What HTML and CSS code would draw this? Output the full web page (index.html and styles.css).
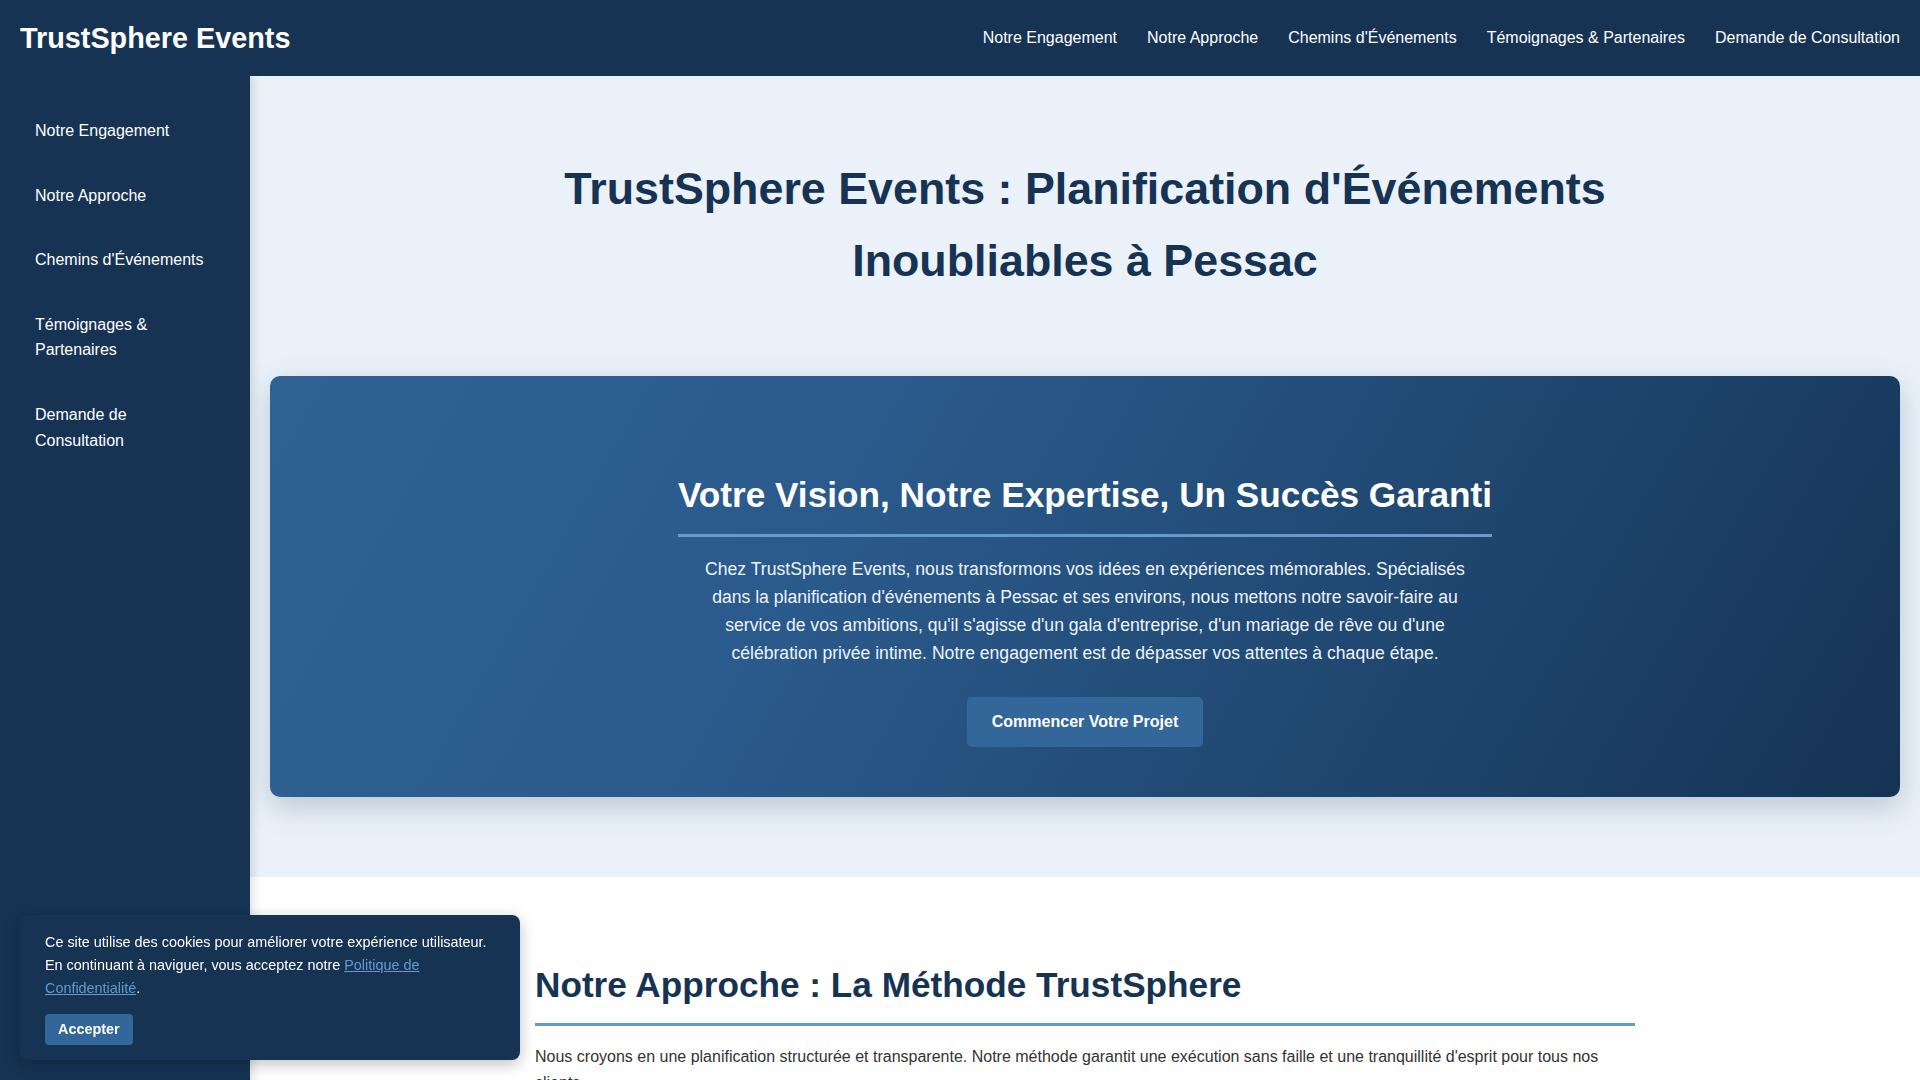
FILE: index.html
```html
<!DOCTYPE html>
<html lang="fr">
<head>
<meta charset="utf-8">
<title>TrustSphere Events</title>
<link rel="stylesheet" href="styles.css">
</head>
<body>
<header class="topbar">
  <div class="logo">TrustSphere Events</div>
  <nav class="topnav">
    <a href="#engagement">Notre Engagement</a>
    <a href="#approche">Notre Approche</a>
    <a href="#chemins">Chemins d'Événements</a>
    <a href="#temoignages">Témoignages &amp; Partenaires</a>
    <a href="#consultation">Demande de Consultation</a>
  </nav>
</header>
<div class="layout">
  <aside class="sidebar">
    <a href="#engagement">Notre Engagement</a>
    <a href="#approche">Notre Approche</a>
    <a href="#chemins">Chemins d'Événements</a>
    <a href="#temoignages">Témoignages &amp; Partenaires</a>
    <a href="#consultation">Demande de Consultation</a>
  </aside>
  <main class="content">
    <section class="hero" id="engagement">
      <h1 class="hero-title">TrustSphere Events : Planification d'Événements Inoubliables à Pessac</h1>
      <div class="card">
        <h2 class="card-title">Votre Vision, Notre Expertise, Un Succès Garanti</h2>
        <p class="card-text">Chez TrustSphere Events, nous transformons vos idées en expériences mémorables. Spécialisés dans la planification d'événements à Pessac et ses environs, nous mettons notre savoir-faire au service de vos ambitions, qu'il s'agisse d'un gala d'entreprise, d'un mariage de rêve ou d'une célébration privée intime. Notre engagement est de dépasser vos attentes à chaque étape.</p>
        <a class="btn" href="#consultation">Commencer Votre Projet</a>
      </div>
    </section>
    <section class="approach" id="approche">
      <div class="approach-inner">
        <h2 class="section-title">Notre Approche : La Méthode TrustSphere</h2>
        <p class="section-text">Nous croyons en une planification structurée et transparente. Notre méthode garantit une exécution sans faille et une tranquillité d'esprit pour tous nos clients.</p>
      </div>
    </section>
  </main>
</div>
<div class="cookie">
  <p class="cookie-text">Ce site utilise des cookies pour améliorer votre expérience utilisateur. En continuant à naviguer, vous acceptez notre <a href="#">Politique de Confidentialité</a>.</p>
  <button class="cookie-btn" type="button">Accepter</button>
</div>
</body>
</html>
```

FILE: styles.css
```css
* { box-sizing: border-box; }
html, body { margin: 0; padding: 0; }
body {
  font-family: "Liberation Sans", Arial, sans-serif;
  line-height: 1.6;
  color: #333;
  background: #ffffff;
}
a { text-decoration: none; }

.topbar {
  height: 76px;
  background: #163354;
  display: flex;
  align-items: center;
  justify-content: space-between;
  padding: 0 20px;
  position: relative;
  z-index: 2;
}
.logo {
  color: #fff;
  font-size: 28.8px;
  font-weight: 700;
  line-height: 1;
}
.topnav { display: flex; gap: 30px; }
.topnav a { color: #fff; font-size: 16px; }

.layout {
  display: flex;
  min-height: calc(100vh - 76px);
}
.sidebar {
  width: 250px;
  flex: 0 0 250px;
  background: #163354;
  padding: 30px 15px;
  display: flex;
  flex-direction: column;
  gap: 15px;
  box-shadow: 2px 0 10px rgba(0,0,0,0.15);
  position: relative;
  z-index: 1;
}
.sidebar a {
  color: #fff;
  font-size: 16px;
  line-height: 1.6;
  padding: 12px 20px;
}

.content { flex: 1; min-width: 0; }

.hero {
  background: #eaf1f9;
  padding: 77px 20px 80px;
  display: flex;
  flex-direction: column;
  align-items: center;
}
.hero-title {
  margin: 0 0 80px;
  max-width: 1150px;
  text-align: center;
  color: #163354;
  font-size: 44.8px;
  line-height: 1.6;
  font-weight: 700;
}
.card {
  width: 100%;
  background: linear-gradient(120deg, #2f6394 0%, #2a5a8b 35%, #1f4770 68%, #163354 100%);
  border-radius: 10px;
  box-shadow: 0 10px 30px rgba(22,51,84,0.22);
  padding: 91px 40px 50px;
  display: flex;
  flex-direction: column;
  align-items: center;
  text-align: center;
}
.card-title {
  display: inline-block;
  margin: 0;
  color: #fff;
  font-size: 35.2px;
  line-height: 1.6;
  font-weight: 700;
  padding-bottom: 10px;
  border-bottom: 3px solid #6699cc;
}
.card-text {
  max-width: 800px;
  margin: 18px 0 30px;
  color: #eef3f9;
  font-size: 17.6px;
  line-height: 1.6;
}
.btn {
  display: inline-block;
  background: #336699;
  color: #fff;
  font-weight: 700;
  font-size: 16px;
  line-height: 1.6;
  padding: 12px 25px;
  border-radius: 5px;
}

.approach {
  background: #fff;
  padding: 80px 20px 40px;
}
.approach-inner {
  max-width: 1100px;
  margin: 0 auto;
}
.section-title {
  margin: 0;
  color: #163354;
  font-size: 35.2px;
  line-height: 1.6;
  font-weight: 700;
  padding-bottom: 10px;
  border-bottom: 3px solid #6699cc;
}
.section-text {
  margin: 18px 0 0;
  font-size: 16px;
  line-height: 1.6;
  color: #333;
}

.cookie {
  position: fixed;
  left: 20px;
  bottom: 20px;
  width: 500px;
  background: #163354;
  color: #fff;
  border-radius: 8px;
  padding: 16px 25px 15px;
  box-shadow: 0 4px 15px rgba(0,0,0,0.25);
  z-index: 10;
}
.cookie-text {
  margin: 0 0 14px;
  font-size: 14.4px;
  line-height: 1.6;
}
.cookie-text a {
  color: #6699cc;
  text-decoration: underline;
}
.cookie-btn {
  font-family: "Liberation Sans", Arial, sans-serif;
  background: #336699;
  color: #fff;
  border: none;
  border-radius: 4px;
  font-size: 14.4px;
  font-weight: 700;
  padding: 7px 13px;
  line-height: 1.2;
}
```
